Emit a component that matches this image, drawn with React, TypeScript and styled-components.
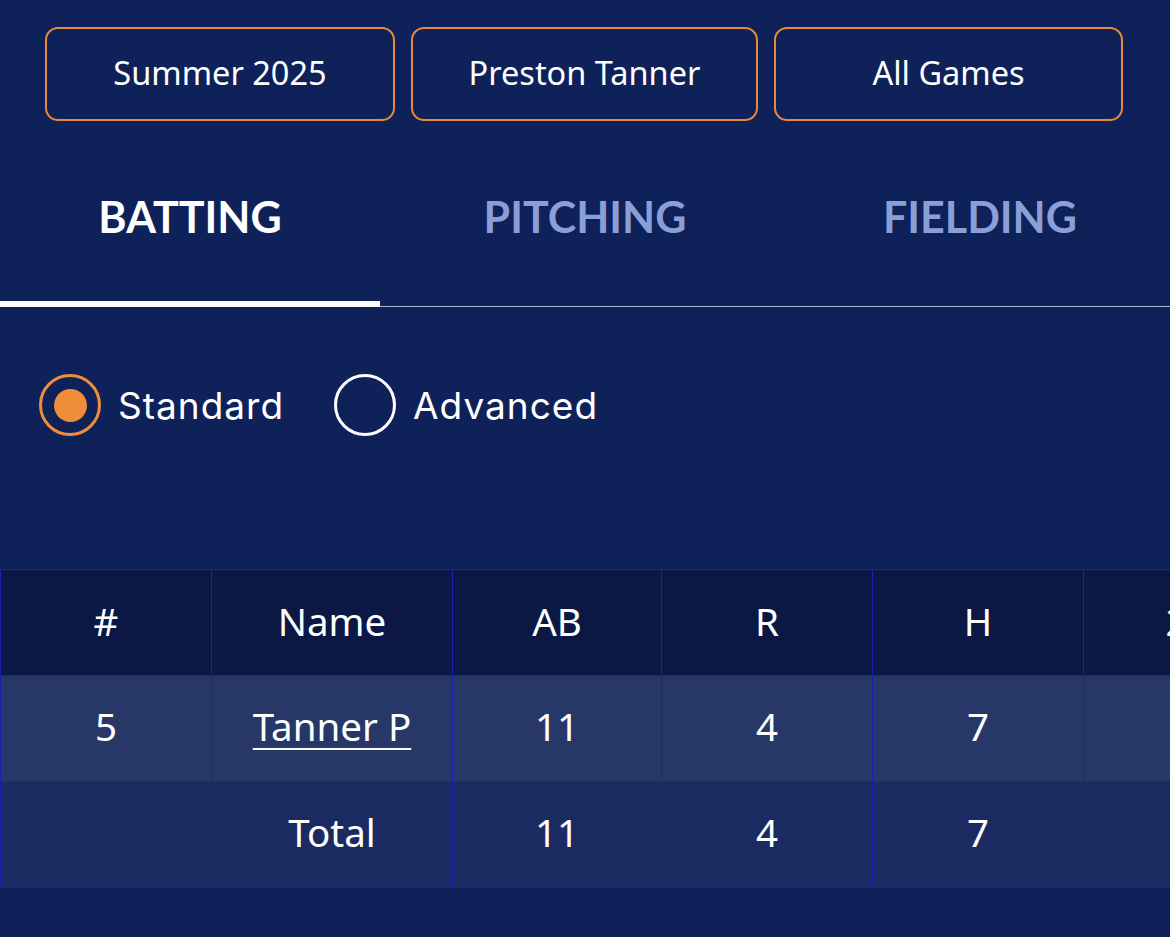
import React, { useState } from "react";
import styled, { createGlobalStyle } from "styled-components";

const Global = createGlobalStyle`
  html, body { margin: 0; padding: 0; background: #0f2159; }
  body { font-family: "Noto Sans", "Lato", sans-serif; color: #fff; overflow: hidden; }
  * { box-sizing: border-box; }
`;

const Page = styled.div`
  width: 1170px;
  min-height: 937px;
  background: #0f2159;
  overflow: hidden;
`;

const FilterRow = styled.div`
  display: grid;
  grid-template-columns: 350px 347px 349px;
  gap: 16px;
  padding: 27px 0 0 45px;
`;

const FilterButton = styled.button`
  height: 94px;
  padding: 0 0 4px;
  background: transparent;
  border: 2.5px solid #e68a3c;
  border-radius: 13px;
  color: #fff;
  font-family: "Noto Sans", "Lato", sans-serif;
  font-size: 32.5px;
  font-weight: 400;
  cursor: pointer;
`;

const TabBar = styled.div`
  display: grid;
  grid-template-columns: repeat(3, 380px);
  column-gap: 15px;
  border-bottom: 1px solid #aeb6cc;
`;

const Tab = styled.div<{ $active?: boolean }>`
  position: relative;
  height: 185px;
  padding-top: 6px;
  display: flex;
  align-items: center;
  justify-content: center;
  font-family: "Lato", sans-serif;
  font-size: 43px;
  font-weight: 700;
  color: ${(p) => (p.$active ? "#ffffff" : "#8a9fd6")};
  cursor: pointer;
  &::after {
    content: "";
    display: ${(p) => (p.$active ? "block" : "none")};
    position: absolute;
    left: 0;
    right: 0;
    bottom: -1px;
    height: 6px;
    background: #ffffff;
  }
`;

const RadioRow = styled.div`
  display: flex;
  align-items: center;
  gap: 50px;
  padding-left: 39px;
  margin-top: 67px;
`;

const RadioOption = styled.label`
  display: flex;
  align-items: center;
  gap: 17px;
  font-family: "Inter", sans-serif;
  font-size: 37px;
  font-weight: 400;
  letter-spacing: 1px;
  color: #fff;
  cursor: pointer;
`;

const RadioCircle = styled.span<{ $checked?: boolean }>`
  width: 62px;
  height: 62px;
  border-radius: 50%;
  border: 3px solid ${(p) => (p.$checked ? "#f08d38" : "#ffffff")};
  display: flex;
  align-items: center;
  justify-content: center;
  &::after {
    content: "";
    display: ${(p) => (p.$checked ? "block" : "none")};
    width: 33px;
    height: 33px;
    border-radius: 50%;
    background: #f08d38;
  }
`;

const TableWrap = styled.div`
  margin-top: 133px;
  width: 1170px;
  overflow-x: auto;
  scrollbar-width: none;
  &::-webkit-scrollbar { display: none; }
`;

const Table = styled.table<{ $w: number }>`
  width: ${(p) => p.$w}px;
  border-collapse: separate;
  border-spacing: 0;
  table-layout: fixed;
  border-top: 1px solid #1b20b5;
  border-left: 1px solid #1b20b5;
  font-family: "Noto Sans", "Lato", sans-serif;
  font-size: 38.5px;
`;

const HeadCell = styled.th<{ $w: number }>`
  width: ${(p) => p.$w}px;
  height: 106px;
  padding: 0 0 4px;
  background: #0a1843;
  border-right: 1px solid #1b20b5;
  border-bottom: 1px solid #1b20b5;
  font-weight: 400;
  text-align: center;
  color: #fff;
`;

const Row = styled.tr<{ $bg: string }>`
  background: ${(p) => p.$bg};
`;

const Cell = styled.td`
  height: 106px;
  padding: 0 0 5px;
  border-right: 1px solid #1b20b5;
  border-bottom: 1px solid #1b20b5;
  text-align: center;
  color: #fff;
`;

const NameLink = styled.a`
  color: #fff;
  text-decoration: underline;
  text-underline-offset: 7px;
  text-decoration-thickness: 2px;
`;

const columns: [string, number][] = [
  ["#", 211],
  ["Name", 241],
  ["AB", 209],
  ["R", 211],
  ["H", 211],
  ["2B", 211],
  ["3B", 211],
  ["HR", 211],
  ["RBI", 211],
];

const tableWidth = columns.reduce((s, [, w]) => s + w, 0) + 1;

export default function App() {
  const [tab, setTab] = useState("BATTING");
  const [mode, setMode] = useState("Standard");
  return (
    <Page>
      <Global />
      <FilterRow>
        <FilterButton>Summer 2025</FilterButton>
        <FilterButton>Preston Tanner</FilterButton>
        <FilterButton>All Games</FilterButton>
      </FilterRow>
      <TabBar>
        {["BATTING", "PITCHING", "FIELDING"].map((t) => (
          <Tab key={t} $active={tab === t} onClick={() => setTab(t)}>
            {t}
          </Tab>
        ))}
      </TabBar>
      <RadioRow>
        {["Standard", "Advanced"].map((m) => (
          <RadioOption key={m} onClick={() => setMode(m)}>
            <RadioCircle $checked={mode === m} />
            {m}
          </RadioOption>
        ))}
      </RadioRow>
      <TableWrap>
        <Table $w={tableWidth}>
          <thead>
            <tr>
              {columns.map(([c, w]) => (
                <HeadCell key={c} $w={w}>
                  {c}
                </HeadCell>
              ))}
            </tr>
          </thead>
          <tbody>
            <Row $bg="#263768">
              <Cell>5</Cell>
              <Cell>
                <NameLink href="#">Tanner P</NameLink>
              </Cell>
              <Cell>11</Cell>
              <Cell>4</Cell>
              <Cell>7</Cell>
              <Cell>1</Cell>
              <Cell>0</Cell>
              <Cell>0</Cell>
              <Cell>3</Cell>
            </Row>
            <Row $bg="#1b2b62">
              <Cell></Cell>
              <Cell>Total</Cell>
              <Cell>11</Cell>
              <Cell>4</Cell>
              <Cell>7</Cell>
              <Cell>1</Cell>
              <Cell>0</Cell>
              <Cell>0</Cell>
              <Cell>3</Cell>
            </Row>
          </tbody>
        </Table>
      </TableWrap>
    </Page>
  );
}
